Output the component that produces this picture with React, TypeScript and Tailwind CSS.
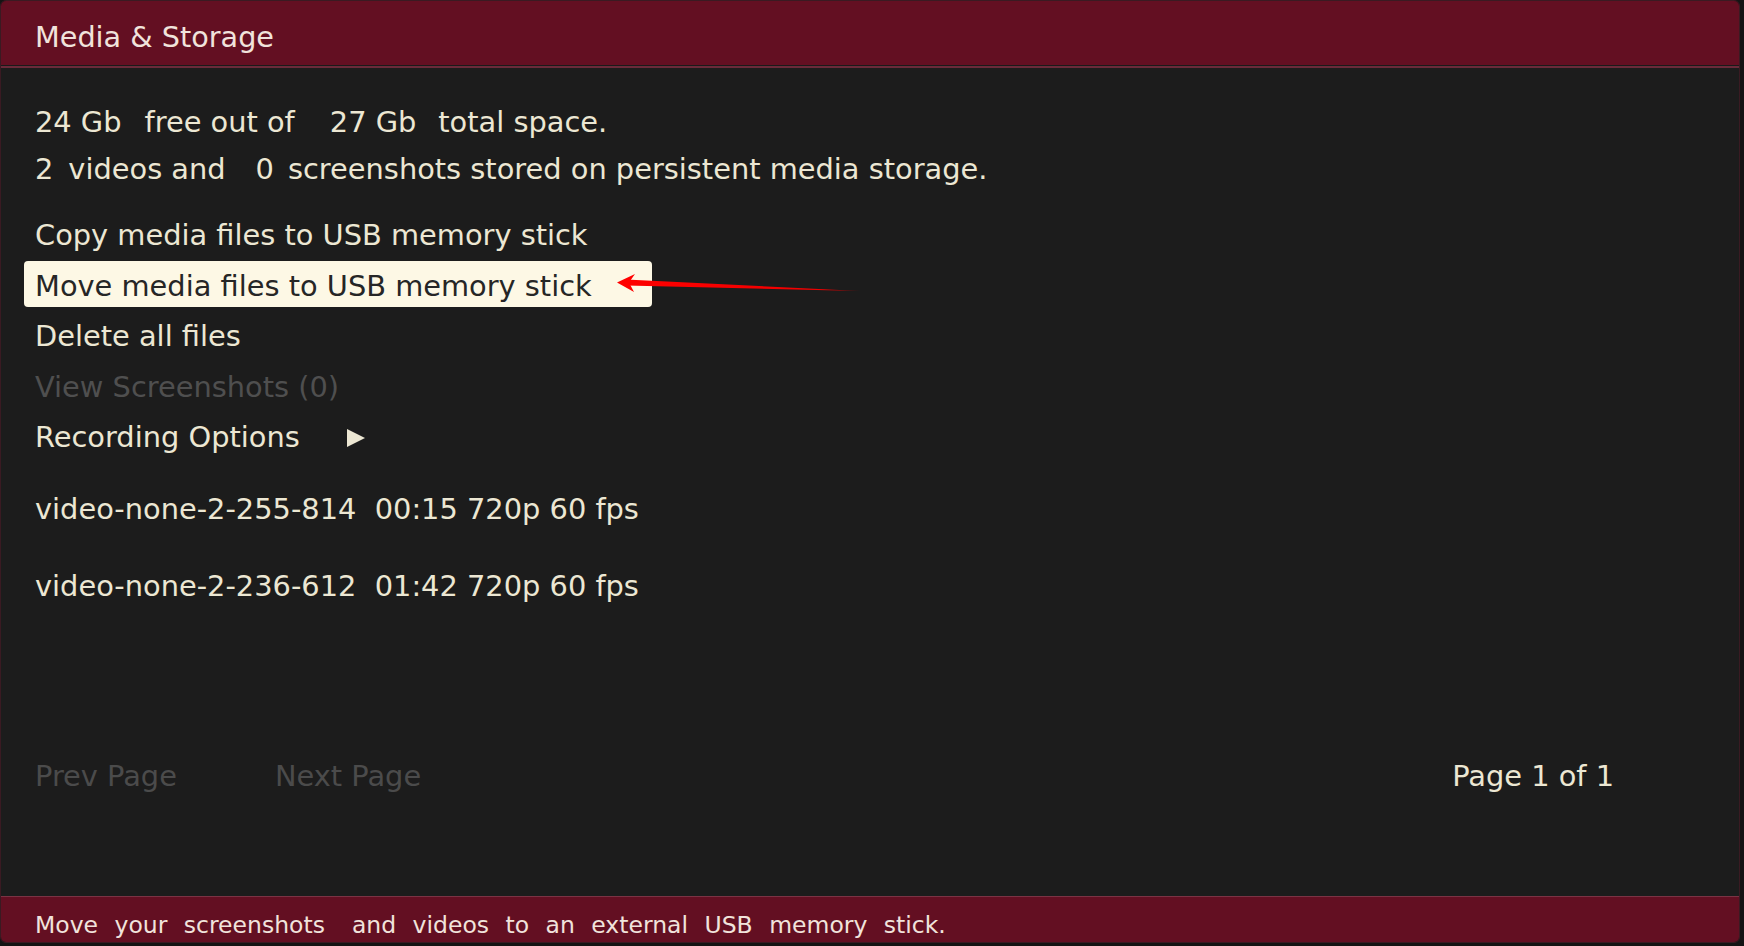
const cream = 'text-[#ece7d3]'

function MenuRow({ label, active, disabled, arrow }: { label: string; active?: boolean; disabled?: boolean; arrow?: boolean }) {
  return (
    <div
      className={
        'flex h-[46px] items-center pl-[11px] ' +
        (active
          ? '-mt-[3px] mb-[3px] w-[628px] rounded-[4px] bg-[#fdf8e5] pt-[6px] text-[#262626]'
          : disabled
            ? 'text-[#4f4f4f]'
            : cream)
      }
    >
      <span>{label}</span>
      {arrow && (
        <svg className="ml-[46px]" width="20" height="20" viewBox="0 0 20 20">
          <polygon points="1,1 19,10 1,19" fill="#ece7d3" />
        </svg>
      )}
    </div>
  )
}

export default function App() {
  return (
    <div className="relative h-[946px] w-[1744px] overflow-hidden bg-[#141414] font-['DejaVu_Sans',sans-serif]">
      <div className="flex h-[943px] w-[1740px] flex-col overflow-hidden rounded-[6px] border border-[#3a1a22]">
        {/* title bar */}
        <div className="flex h-[64px] shrink-0 items-center bg-[#630f22] pl-[34px] pt-[9px] text-[28.7px] text-[#f1e3dc]">
          Media &amp; Storage
        </div>
        <div className="h-[1px] bg-[#1a1a1a]" />
        <div className="h-[2px] bg-[#6a2a3a]" />

        {/* body */}
        <div className={'flex flex-1 flex-col bg-[#1c1c1c] text-[28.85px] ' + cream}>
          <div className="pl-[34px] pt-[31px] leading-[47px]">
            <div className="flex whitespace-pre">
              <span>24 Gb</span>
              <span className="ml-[23px]">free out of</span>
              <span className="ml-[35px]">27 Gb</span>
              <span className="ml-[22px]">total space.</span>
            </div>
            <div className="flex whitespace-pre">
              <span>2</span>
              <span className="ml-[15px]">videos and</span>
              <span className="ml-[30px]">0</span>
              <span className="ml-[14px]">screenshots stored on persistent media storage.</span>
            </div>
          </div>

          <div className="mt-[20px] flex flex-col gap-[4.5px] pl-[23px]">
            <MenuRow label="Copy media files to USB memory stick" />
            <MenuRow label="Move media files to USB memory stick" active />
            <MenuRow label="Delete all files" />
            <MenuRow label="View Screenshots (0)" disabled />
            <MenuRow label="Recording Options" arrow />
          </div>

          <div className="mt-[26px] flex flex-col gap-[31px] pl-[34px] whitespace-pre">
            <div className="flex h-[46px] items-center">video-none-2-255-814  00:15 720p 60 fps</div>
            <div className="flex h-[46px] items-center">video-none-2-236-612  01:42 720p 60 fps</div>
          </div>

          <div className="mt-[144px] flex h-[46px] items-center pl-[34px]">
            <span className="text-[#4b4b4b]">Prev Page</span>
            <span className="ml-[98px] text-[#4b4b4b]">Next Page</span>
            <span className="ml-auto mr-[125px]">Page 1 of 1</span>
          </div>
        </div>

        {/* status bar */}
        <div className="h-[1px] bg-[#7a3344]" />
        <div className="flex h-[45px] shrink-0 items-center bg-[#630f22] pl-[34px] pt-[12px] text-[23.5px] text-[#f1e3dc] [word-spacing:9px]">
          <span>Move your screenshots</span>
          <span className="ml-[27px]">and videos to an external USB memory stick.</span>
        </div>
      </div>

      {/* red annotation arrow */}
      <svg className="pointer-events-none absolute left-0 top-0" width="1744" height="946">
        <defs>
          <linearGradient id="fade" x1="617" y1="0" x2="860" y2="0" gradientUnits="userSpaceOnUse">
            <stop offset="0" stopColor="#ff0000" />
            <stop offset="0.85" stopColor="#f00000" />
            <stop offset="1" stopColor="#7a0a0a" />
          </linearGradient>
        </defs>
        <polygon points="626,279.5 860,291 626,285.5" fill="url(#fade)" />
        <polygon points="617,282.5 635,274 629,282.5 634,292" fill="#ff0000" />
      </svg>
    </div>
  )
}
